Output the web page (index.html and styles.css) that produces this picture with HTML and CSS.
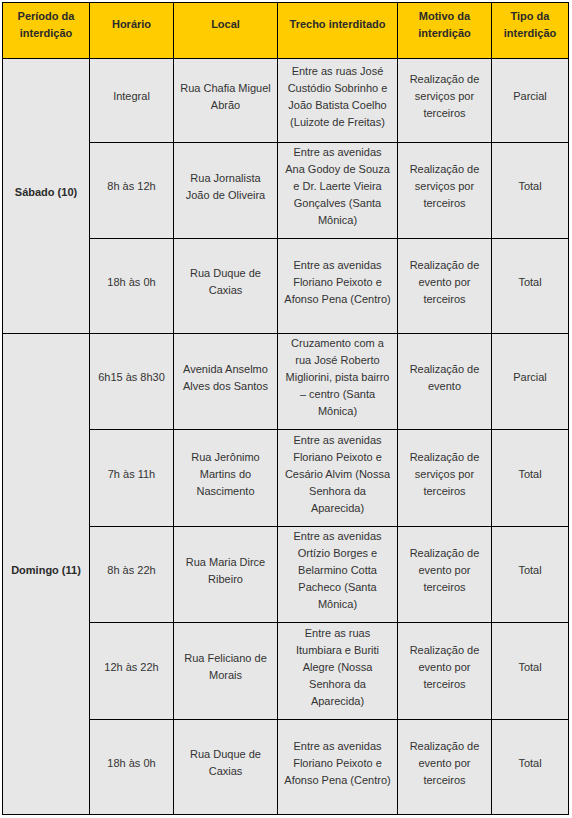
FILE: index.html
```html
<!DOCTYPE html>
<html lang="pt-BR">
<head>
<meta charset="utf-8">
<title>Interdições</title>
<link rel="stylesheet" href="styles.css">
</head>
<body>
<table class="grid">
  <colgroup>
    <col class="c1"><col class="c2"><col class="c3"><col class="c4"><col class="c5"><col class="c6">
  </colgroup>
  <thead>
    <tr class="h-head">
      <th>Período da interdição</th>
      <th>Horário</th>
      <th>Local</th>
      <th>Trecho interditado</th>
      <th>Motivo da interdição</th>
      <th>Tipo da interdição</th>
    </tr>
  </thead>
  <tbody>
    <tr class="h84">
      <td class="day" rowspan="3">Sábado (10)</td>
      <td>Integral</td>
      <td>Rua Chafia Miguel Abrão</td>
      <td>Entre as ruas José Custódio Sobrinho e João Batista Coelho (Luizote de Freitas)</td>
      <td>Realização de serviços por terceiros</td>
      <td>Parcial</td>
    </tr>
    <tr class="h96">
      <td>8h às 12h</td>
      <td>Rua Jornalista João de Oliveira</td>
      <td>Entre as avenidas Ana Godoy de Souza e Dr. Laerte Vieira Gonçalves (Santa Mônica)</td>
      <td>Realização de serviços por terceiros</td>
      <td>Total</td>
    </tr>
    <tr class="h95">
      <td>18h às 0h</td>
      <td>Rua Duque de Caxias</td>
      <td>Entre as avenidas Floriano Peixoto e Afonso Pena (Centro)</td>
      <td>Realização de evento por terceiros</td>
      <td>Total</td>
    </tr>
    <tr class="h96">
      <td class="day" rowspan="5">Domingo (11)</td>
      <td>6h15 às 8h30</td>
      <td>Avenida Anselmo Alves dos Santos</td>
      <td>Cruzamento com a rua José Roberto Migliorini, pista bairro – centro (Santa Mônica)</td>
      <td>Realização de evento</td>
      <td>Parcial</td>
    </tr>
    <tr class="h97">
      <td>7h às 11h</td>
      <td>Rua Jerônimo Martins do Nascimento</td>
      <td>Entre as avenidas Floriano Peixoto e Cesário Alvim (Nossa Senhora da Aparecida)</td>
      <td>Realização de serviços por terceiros</td>
      <td>Total</td>
    </tr>
    <tr class="h96">
      <td>8h às 22h</td>
      <td>Rua Maria Dirce Ribeiro</td>
      <td>Entre as avenidas Ortízio Borges e Belarmino Cotta Pacheco (Santa Mônica)</td>
      <td>Realização de evento por terceiros</td>
      <td>Total</td>
    </tr>
    <tr class="h97">
      <td>12h às 22h</td>
      <td>Rua Feliciano de Morais</td>
      <td>Entre as ruas Itumbiara e Buriti Alegre (Nossa Senhora da Aparecida)</td>
      <td>Realização de evento por terceiros</td>
      <td>Total</td>
    </tr>
    <tr class="h95">
      <td>18h às 0h</td>
      <td>Rua Duque de Caxias</td>
      <td>Entre as avenidas Floriano Peixoto e Afonso Pena (Centro)</td>
      <td>Realização de evento por terceiros</td>
      <td>Total</td>
    </tr>
  </tbody>
</table>
</body>
</html>
```
FILE: styles.css
```css
html, body {
  margin: 0;
  padding: 0;
  background: #ffffff;
}
body {
  padding: 2px 0 0 2px;
  font-family: "Liberation Sans", Arial, sans-serif;
  font-size: 11px;
  color: #333333;
}
.grid {
  border-collapse: collapse;
  table-layout: fixed;
  width: 567px;
}
.c1 { width: 87px; }
.c2 { width: 84px; }
.c3 { width: 104px; }
.c4 { width: 120px; }
.c5 { width: 94px; }
.c6 { width: 77px; }
.grid th,
.grid td {
  border: 1px solid #000000;
  text-align: center;
  vertical-align: middle;
  line-height: 17px;
  padding: 0 5px 8px;
}
.grid th {
  background: #ffcc00;
  color: #2b2b2b;
  font-weight: bold;
  padding-bottom: 12px;
}
.grid td {
  background: #e7e7e7;
}
.grid td.day {
  font-weight: bold;
  color: #2b2b2b;
}
.h-head { height: 56px; }
.h84 { height: 84px; }
.h95 { height: 95px; }
.h96 { height: 96px; }
.h97 { height: 97px; }
```
